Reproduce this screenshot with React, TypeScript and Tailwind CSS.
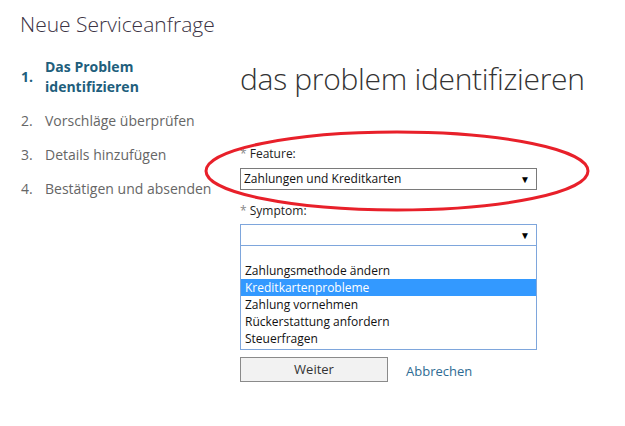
import React from 'react';

const steps = [
  { n: '2.', label: 'Vorschläge überprüfen' },
  { n: '3.', label: 'Details hinzufügen' },
  { n: '4.', label: 'Bestätigen und absenden' },
];

const symptoms = [
  'Zahlungsmethode ändern',
  'Kreditkartenprobleme',
  'Zahlung vornehmen',
  'Rückerstattung anfordern',
  'Steuerfragen',
];

function Arrow() {
  return <span className="text-[10px] leading-none text-black">▼</span>;
}

export default function App() {
  return (
    <div
      className="relative w-[625px] h-[426px] bg-white overflow-hidden text-[#333]"
      style={{ fontFamily: '"Open Sans", "Noto Sans", sans-serif' }}
    >
      <div className="pl-[20px] pt-[10px]">
        <h1 className="text-[21px] font-light leading-[28px] text-[#3b3344]">Neue Serviceanfrage</h1>
      </div>

      <div className="flex pt-[19px]">
        {/* Schritte */}
        <div className="w-[240px] shrink-0 pl-[21px]">
          <div className="flex items-center font-bold text-[14px] leading-[20px] text-[#215e7c]">
            <span className="w-[24px]">1.</span>
            <span>
              Das Problem
              <br />
              identifizieren
            </span>
          </div>
          <div className="mt-[14px] flex flex-col gap-[14px] text-[14px] leading-[20px] text-[#666]">
            {steps.map((s) => (
              <div key={s.n} className="flex">
                <span className="w-[24px]">{s.n}</span>
                <span>{s.label}</span>
              </div>
            ))}
          </div>
        </div>

        {/* Formular */}
        <div className="w-[297px]">
          <h2 className="text-[30px] font-light leading-[40px] tracking-[-0.3px] text-[#333] whitespace-nowrap mt-[2px]">
            das problem identifizieren
          </h2>

          <div className="mt-[47px] text-[12px] leading-[16px] text-[#222]">
            <span className="text-[#888]">* </span>Feature:
          </div>
          <div className="mt-[6px] h-[22px] border border-[#7a7a7a] flex items-center justify-between pl-[3px] pr-[6px] text-[12px] text-[#111]">
            <span>Zahlungen und Kreditkarten</span>
            <Arrow />
          </div>

          <div className="mt-[13px] text-[12px] leading-[16px] text-[#222]">
            <span className="text-[#888]">* </span>Symptom:
          </div>
          <div className="mt-[5px] h-[22px] border border-[#7ea6dc] flex items-center justify-end pr-[6px]">
            <Arrow />
          </div>
          <div className="border border-t-0 border-[#7ea6dc] pt-[16px] pb-[2px] text-[12px] leading-[17px] text-[#111]">
            {symptoms.map((s) => (
              <div
                key={s}
                className={
                  s === 'Kreditkartenprobleme'
                    ? 'bg-[#3399ff] text-white pl-[4px]'
                    : 'pl-[4px]'
                }
              >
                {s}
              </div>
            ))}
          </div>

          <div className="mt-[7px] flex items-center">
            <button className="w-[148px] h-[25px] border border-[#8a8a8a] bg-[#f2f2f2] text-[13px] text-[#333]">
              Weiter
            </button>
            <a className="ml-[18px] mt-[5px] text-[13px] text-[#2e6b93]">Abbrechen</a>
          </div>
        </div>
      </div>

      {/* Markierung */}
      <svg className="absolute left-0 top-0 pointer-events-none" width="625" height="426">
        <ellipse cx="397" cy="171" rx="191" ry="39" fill="none" stroke="#e8202a" strokeWidth="3" />
      </svg>
    </div>
  );
}
